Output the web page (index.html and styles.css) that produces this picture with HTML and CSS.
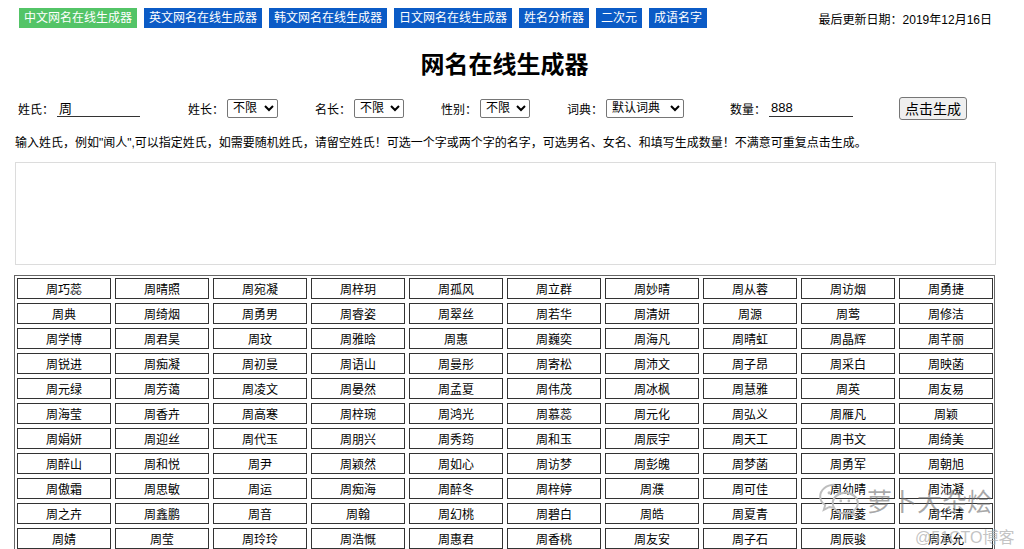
FILE: index.html
```html
<!DOCTYPE html>
<html lang="zh-CN">
<head>
<meta charset="utf-8">
<title>网名在线生成器</title>
<link rel="stylesheet" href="styles.css">
</head>
<body>
<div class="page">
  <div class="topbar">
    <nav class="nav">
      <a class="nav-item active">中文网名在线生成器</a>
      <a class="nav-item">英文网名在线生成器</a>
      <a class="nav-item">韩文网名在线生成器</a>
      <a class="nav-item">日文网名在线生成器</a>
      <a class="nav-item">姓名分析器</a>
      <a class="nav-item">二次元</a>
      <a class="nav-item">成语名字</a>
    </nav>
    <div class="updated">最后更新日期：2019年12月16日</div>
  </div>

  <div class="container">
    <h1 class="title">网名在线生成器</h1>

    <form class="form-row">
      <label class="field">
        <span class="label">姓氏：</span>
        <input class="text-input w83" type="text" value="周">
      </label>
      <label class="field gap-l">
        <span class="label">姓长：</span>
        <select class="select w51"><option>不限</option></select>
      </label>
      <label class="field gap-s">
        <span class="label">名长：</span>
        <select class="select w50"><option>不限</option></select>
      </label>
      <label class="field gap-s">
        <span class="label">性别：</span>
        <select class="select w50"><option>不限</option></select>
      </label>
      <label class="field gap-s">
        <span class="label">词典：</span>
        <select class="select w78"><option>默认词典</option></select>
      </label>
      <label class="field gap-m">
        <span class="label">数量：</span>
        <input class="text-input w84" type="text" value="888">
      </label>
      <button class="submit gap-m" type="button">点击生成</button>
    </form>

    <p class="hint">输入姓氏，例如"闻人",可以指定姓氏，如需要随机姓氏，请留空姓氏！可选一个字或两个字的名字，可选男名、女名、和填写生成数量！不满意可重复点击生成。</p>

    <div class="result-box"></div>

    <div class="names" id="names"></div>
  </div>

  <div class="watermark">
    <svg class="wm-icon" width="48" height="34" viewBox="0 0 48 38">
      <path d="M19 2C9.6 2 3 8 3 15c0 4 2.2 7.4 5.6 9.6L7 30l6.2-3.2c1.8.5 3.8.8 5.8.8" fill="none" stroke="#bdbdbd" stroke-width="2.2"/>
      <path d="M31 11c-8 0-14 5.2-14 11.5S23 34 31 34c1.6 0 3.2-.2 4.6-.7L41 36l-1.4-4.6C43 29.3 45 26.2 45 22.5 45 16.2 39 11 31 11z" fill="none" stroke="#bdbdbd" stroke-width="2.2"/>
      <circle cx="13" cy="11" r="1.8" fill="#bdbdbd"/>
      <circle cx="24" cy="11" r="1.8" fill="#bdbdbd"/>
      <circle cx="26" cy="20" r="1.5" fill="#bdbdbd"/>
      <circle cx="35" cy="20" r="1.5" fill="#bdbdbd"/>
    </svg>
    <span class="wm-text">萝卜大杂烩</span>
  </div>
  <div class="wm-site">@51CTO博客</div>
</div>
<script>
  var names = [
    "周巧蕊","周晴照","周宛凝","周梓玥","周孤风","周立群","周妙晴","周从蓉","周访烟","周勇捷",
    "周典","周绮烟","周勇男","周睿姿","周翠丝","周若华","周清妍","周源","周莺","周修洁",
    "周学博","周君昊","周玟","周雅晗","周惠","周巍奕","周海凡","周晴虹","周晶辉","周芊丽",
    "周锐进","周痴凝","周初曼","周语山","周曼彤","周寄松","周沛文","周子昂","周采白","周映菡",
    "周元绿","周芳蔼","周凌文","周晏然","周孟夏","周伟茂","周冰枫","周慧雅","周英","周友易",
    "周海莹","周香卉","周高寒","周梓琬","周鸿光","周慕蕊","周元化","周弘义","周雁凡","周颖",
    "周娟妍","周迎丝","周代玉","周朋兴","周秀筠","周和玉","周辰宇","周天工","周书文","周绮美",
    "周醉山","周和悦","周尹","周颖然","周如心","周访梦","周彭魄","周梦菡","周勇军","周朝旭",
    "周傲霜","周思敏","周运","周痴海","周醉冬","周梓婷","周濮","周可佳","周幼晴","周沛凝",
    "周之卉","周鑫鹏","周音","周翰","周幻桃","周碧白","周皓","周夏青","周雁菱","周华清",
    "周婧","周莹","周玲玲","周浩慨","周惠君","周香桃","周友安","周子石","周辰骏","周承允"
  ];
  var box = document.getElementById("names");
  names.forEach(function (n) {
    var d = document.createElement("div");
    d.className = "name-cell";
    d.textContent = n;
    box.appendChild(d);
  });
</script>
</body>
</html>
```

FILE: styles.css
```css
* { box-sizing: border-box; }

html, body {
  margin: 0;
  padding: 0;
  background: #fff;
  color: #000;
  font-family: "Liberation Sans", "Noto Sans CJK SC", sans-serif;
  font-size: 12px;
  overflow: hidden;
}

.page {
  position: relative;
  height: 549px;
  padding-top: 8px;
}

.topbar {
  display: flex;
  align-items: center;
  justify-content: space-between;
  padding: 0 32px 0 19px;
  height: 20px;
}

.nav {
  display: flex;
  gap: 7px;
}

.nav-item {
  display: block;
  height: 20px;
  line-height: 20px;
  padding: 0 5px;
  background: #0b5bc6;
  color: #fff;
  font-size: 12px;
  text-decoration: none;
  white-space: nowrap;
}

.nav-item.active {
  background: #53c467;
}

.updated {
  font-size: 12px;
  white-space: nowrap;
}

.container {
  width: 981px;
  margin-left: 14px;
}

.title {
  margin: 20px 0 0;
  height: 30px;
  line-height: 30px;
  text-align: center;
  font-size: 24px;
  font-weight: 700;
  font-family: "Noto Sans CJK SC", sans-serif;
}

.form-row {
  display: flex;
  align-items: center;
  height: 24px;
  margin: 18px 0 0;
  padding-left: 4px;
}

.field {
  display: flex;
  align-items: center;
}

.gap-s { margin-left: 37px; }
.gap-m { margin-left: 46px; }
.gap-l { margin-left: 48px; }

.label {
  width: 36px;
  margin-right: 3px;
  font-size: 12px;
  white-space: nowrap;
}

.text-input {
  height: 18px;
  padding: 0 2px;
  border: none;
  border-bottom: 1px solid #333;
  outline: none;
  font-family: "Liberation Sans", "Noto Sans CJK SC", sans-serif;
  font-size: 13px;
  color: #000;
  background: transparent;
}

.w83 { width: 83px; }
.w84 { width: 84px; }

.select {
  height: 19px;
  padding: 0 0 0 1px;
  border: 1px solid #767676;
  border-radius: 2px;
  background-color: #fff;
  font-family: "Liberation Sans", "Noto Sans CJK SC", sans-serif;
  font-size: 12px;
  line-height: 15px;
  color: #000;
}

.w50 { width: 50px; }
.w51 { width: 51px; }
.w78 { width: 78px; }

.submit {
  width: 68px;
  height: 23px;
  padding: 0;
  border: 1px solid #767676;
  border-radius: 3px;
  background: #efefef;
  font-family: "Noto Sans CJK SC", sans-serif;
  font-size: 14px;
  line-height: 20px;
  color: #000;
}

.hint {
  margin: 14px 0 0 1px;
  height: 18px;
  line-height: 18px;
  font-size: 12px;
  white-space: nowrap;
}

.result-box {
  margin: 10px 0 0 1px;
  width: 981px;
  height: 103px;
  border: 1px solid #dcdcdc;
}

.names {
  margin-top: 10px;
  width: 981px;
  border: 1px solid #666;
  padding: 2px;
  display: grid;
  grid-template-columns: repeat(10, 94px);
  grid-auto-rows: 21px;
  column-gap: 4px;
  row-gap: 4px;
}

.name-cell {
  border: 1px solid #333;
  text-align: center;
  line-height: 19px;
  font-size: 12px;
  font-family: "Noto Sans CJK SC", sans-serif;
  white-space: nowrap;
}

.watermark {
  position: absolute;
  left: 815px;
  top: 482px;
  display: flex;
  align-items: center;
  gap: 4px;
  pointer-events: none;
}

.wm-text {
  font-family: "Noto Sans CJK SC", sans-serif;
  font-size: 25px;
  color: rgba(110, 110, 110, 0.6);
  white-space: nowrap;
}

.wm-site {
  position: absolute;
  left: 915px;
  top: 524px;
  font-family: "Liberation Sans", "Noto Sans CJK SC", sans-serif;
  font-size: 16px;
  color: rgba(180, 180, 180, 0.8);
  white-space: nowrap;
  pointer-events: none;
}
```
